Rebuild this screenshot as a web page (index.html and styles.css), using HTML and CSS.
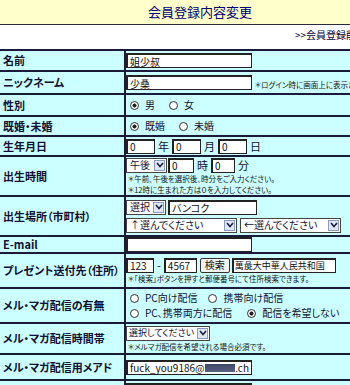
FILE: index.html
```html
<!DOCTYPE html>
<html lang="ja">

<head>
    <meta charset="UTF-8">
    <meta name="viewport" content="width=device-width, initial-scale=1.0">
    <title>会員登録内容変更</title>
    <link rel="stylesheet" href="styles.css">
</head>

<body>
    <div class="page">
        <div class="title">会員登録内容変更</div>
        <div class="nav">&gt;&gt;会員登録削除</div>

        <table class="form">
            <tr class="h21">
                <th>名前</th>
                <td><input class="txt w126" type="text" value="姐少叔"></td>
            </tr>
            <tr class="h23">
                <th>ニックネーム</th>
                <td><input class="txt w126" type="text" value="少桑"><span class="note inline">＊ログイン時に画面上に表示されます。</span></td>
            </tr>
            <tr class="h22">
                <th>性別</th>
                <td>
                    <div class="line pad">
                        <span class="radio on"></span><span class="opt">男</span>
                        <span class="radio"></span><span class="opt">女</span>
                    </div>
                </td>
            </tr>
            <tr class="h20">
                <th>既婚・未婚</th>
                <td>
                    <div class="line pad">
                        <span class="radio on"></span><span class="opt">既婚</span>
                        <span class="radio"></span><span class="opt">未婚</span>
                    </div>
                </td>
            </tr>
            <tr class="h20">
                <th>生年月日</th>
                <td>
                    <div class="line">
                        <input class="txt w29" type="text" value="0"><span class="unit">年</span>
                        <input class="txt w29" type="text" value="0"><span class="unit">月</span>
                        <input class="txt w29" type="text" value="0"><span class="unit">日</span>
                    </div>
                </td>
            </tr>
            <tr class="h40">
                <th>出生時間</th>
                <td>
                    <div class="line">
                        <span class="sel w41"><span class="sel-text">午後</span><span class="sel-btn"><svg width="8" height="6" viewBox="0 0 8 6"><path d="M1 1 L4 4.5 L7 1" fill="none" stroke="#1a2040" stroke-width="1.6"/></svg></span></span>
                        <input class="txt w26 gap1" type="text" value="0"><span class="unit">時</span>
                        <input class="txt w24" type="text" value="0"><span class="unit">分</span>
                    </div>
                    <div class="note">＊午前、午後を選択後、時分をご入力ください。</div>
                    <div class="note">＊12時に生まれた方は０を入力してください。</div>
                </td>
            </tr>
            <tr class="h40">
                <th>出生場所（市町村）</th>
                <td>
                    <div class="line">
                        <span class="sel w40"><span class="sel-text">選択</span><span class="sel-btn"><svg width="8" height="6" viewBox="0 0 8 6"><path d="M1 1 L4 4.5 L7 1" fill="none" stroke="#1a2040" stroke-width="1.6"/></svg></span></span>
                        <input class="txt w89 gap2" type="text" value="バンコク">
                    </div>
                    <div class="line row2">
                        <span class="sel w111"><span class="sel-text">↑選んでください</span><span class="sel-btn"><svg width="8" height="6" viewBox="0 0 8 6"><path d="M1 1 L4 4.5 L7 1" fill="none" stroke="#1a2040" stroke-width="1.6"/></svg></span></span>
                        <span class="sel w101 gap3"><span class="sel-text">←選んでください</span><span class="sel-btn"><svg width="8" height="6" viewBox="0 0 8 6"><path d="M1 1 L4 4.5 L7 1" fill="none" stroke="#1a2040" stroke-width="1.6"/></svg></span></span>
                    </div>
                </td>
            </tr>
            <tr class="h17">
                <th>E-mail</th>
                <td><input class="txt w126" type="text" value=""></td>
            </tr>
            <tr class="h35">
                <th>プレゼント送付先（住所）</th>
                <td>
                    <div class="line">
                        <input class="txt w28" type="text" value="123"><span class="dash">-</span>
                        <input class="txt w33" type="text" value="4567">
                        <button class="btn gap3">検索</button>
                        <input class="txt w104 gap2 tight" type="text" value="萬彘大中華人民共和国">
                    </div>
                    <div class="note">＊「検索」ボタンを押すと郵便番号にて住所検索できます。</div>
                </td>
            </tr>
            <tr class="h35">
                <th>メル・マガ配信の有無</th>
                <td>
                    <div class="line pad">
                        <span class="radio"></span><span class="opt o1">PC向け配信</span>
                        <span class="radio"></span><span class="opt">携帯向け配信</span>
                    </div>
                    <div class="line pad row2">
                        <span class="radio"></span><span class="opt o2">PC、携帯両方に配信</span>
                        <span class="radio on"></span><span class="opt">配信を希望しない</span>
                    </div>
                </td>
            </tr>
            <tr class="h31">
                <th>メル・マガ配信時間帯</th>
                <td>
                    <span class="sel w84"><span class="sel-text narrow">選択してください</span><span class="sel-btn"><svg width="8" height="6" viewBox="0 0 8 6"><path d="M1 1 L4 4.5 L7 1" fill="none" stroke="#1a2040" stroke-width="1.6"/></svg></span></span>
                    <div class="note">＊メルマガ配信を希望される場合必須です。</div>
                </td>
            </tr>
            <tr class="h26">
                <th>メル・マガ配信用メアド</th>
                <td><span class="txt fake w126">fuck_you9186@<span class="blur"></span>.ch</span></td>
            </tr>
            <tr class="h20">
                <th></th>
                <td><input class="txt w126" type="text" value=""></td>
            </tr>
        </table>
    </div>
</body>

</html>
```

FILE: styles.css
```css
* {
    margin: 0;
    padding: 0;
    box-sizing: border-box;
}

body {
    background: #fff;
    overflow: hidden;
    font-family: "Noto Sans CJK JP", sans-serif;
    font-feature-settings: "palt";
    color: #111133;
}

.page {
    width: 400px;
}

.title {
    height: 25px;
    line-height: 24px;
    background: #ffffcc;
    border-bottom: 1px solid #2a2a3a;
    text-align: center;
    font-size: 13px;
    color: #000070;
}

.nav {
    height: 24px;
    padding: 3px 34px 0 0;
    text-align: right;
    font-size: 10px;
    line-height: 14px;
    color: #000033;
}

.form {
    width: 400px;
    border-collapse: separate;
    border-spacing: 0;
    border-top: 2px solid #1a1a3a;
}

.form th,
.form td {
    background: #ccffff;
    border-bottom: 2px solid #1a1a3a;
    vertical-align: middle;
    white-space: nowrap;
}

.form th {
    width: 126px;
    padding-left: 3px;
    border-right: 2px solid #1a1a3a;
    text-align: left;
    font-size: 11px;
    font-weight: bold;
    line-height: 13px;
}

.form td {
    padding: 0;
    font-size: 10px;
    line-height: 12px;
}

.h17 th, .h17 td { height: 17px; }
.h20 th, .h20 td { height: 20px; }
.h21 th, .h21 td { height: 21px; }
.h22 th, .h22 td { height: 22px; }
.h23 th, .h23 td { height: 23px; }
.h26 th, .h26 td { height: 26px; }
.h31 th, .h31 td { height: 31px; }
.h35 th, .h35 td { height: 35px; }
.h40 th, .h40 td { height: 40px; }

.line {
    display: flex;
    align-items: center;
}

.line.pad {
    padding-left: 4px;
}

.row2 {
    margin-top: 3px;
}

/* テキスト入力 */
.txt {
    display: inline-block;
    height: 15px;
    padding: 0 2px;
    border: 1px solid #222;
    border-top-width: 2px;
    border-left-width: 2px;
    background: #fff;
    font-family: inherit;
    font-feature-settings: "palt";
    font-size: 10px;
    line-height: 11px;
    color: #111;
    vertical-align: middle;
    outline: none;
}

.txt.tight {
    padding: 0 1px;
    font-size: 9px;
}

.fake {
    display: inline-flex;
    align-items: center;
}

.blur {
    display: inline-block;
    width: 32px;
    height: 8px;
    background: linear-gradient(#3e4668, #5a6284);
}

.w24 { width: 24px; }
.w26 { width: 26px; }
.w28 { width: 28px; }
.w29 { width: 29px; }
.w33 { width: 33px; }
.w40 { width: 40px; }
.w41 { width: 41px; }
.w84 { width: 84px; }
.w89 { width: 89px; }
.w101 { width: 101px; }
.w104 { width: 104px; }
.w111 { width: 111px; }
.w126 { width: 126px; }

.gap1 { margin-left: 1px; }
.gap2 { margin-left: 2px; }
.gap3 { margin-left: 3px; }

.unit {
    margin: 0 3px;
    font-size: 11px;
}

.dash {
    margin: 0 3px;
    font-size: 11px;
}

/* セレクト */
.sel {
    display: inline-flex;
    align-items: center;
    height: 15px;
    padding: 1px;
    border: 1px solid #444;
    background: #fff;
    vertical-align: middle;
}

.sel-text {
    flex: 1;
    padding-left: 2px;
    font-size: 10px;
    line-height: 12px;
}

.sel-text.narrow {
    padding-left: 1px;
    font-size: 9px;
}

.sel-btn {
    display: flex;
    align-items: center;
    justify-content: center;
    width: 11px;
    height: 11px;
    border: 1px solid #8a9ac0;
    background: #dfe6f4;
}

.btn {
    height: 15px;
    padding: 0 4px;
    border: 1px solid #333;
    border-radius: 2px;
    background: #f2f2ee;
    font-family: inherit;
    font-size: 10px;
    line-height: 12px;
    color: #111;
}

/* ラジオ */
.radio {
    display: inline-block;
    width: 9px;
    height: 9px;
    border: 1px solid #333;
    border-radius: 50%;
    background: #fff;
}

.radio.on {
    background: radial-gradient(circle, #222 0 1.8px, #fff 2.3px);
}

.opt {
    margin: 0 14px 0 6px;
    font-size: 10px;
}

.opt.o1 {
    margin-right: 11px;
}

.opt.o2 {
    margin-right: 15px;
}

.note {
    font-size: 7.5px;
    line-height: 11px;
    padding-left: 2px;
    color: #111;
}

.note.inline {
    display: inline-block;
    margin-left: 3px;
    vertical-align: bottom;
    padding-left: 0;
}
```
